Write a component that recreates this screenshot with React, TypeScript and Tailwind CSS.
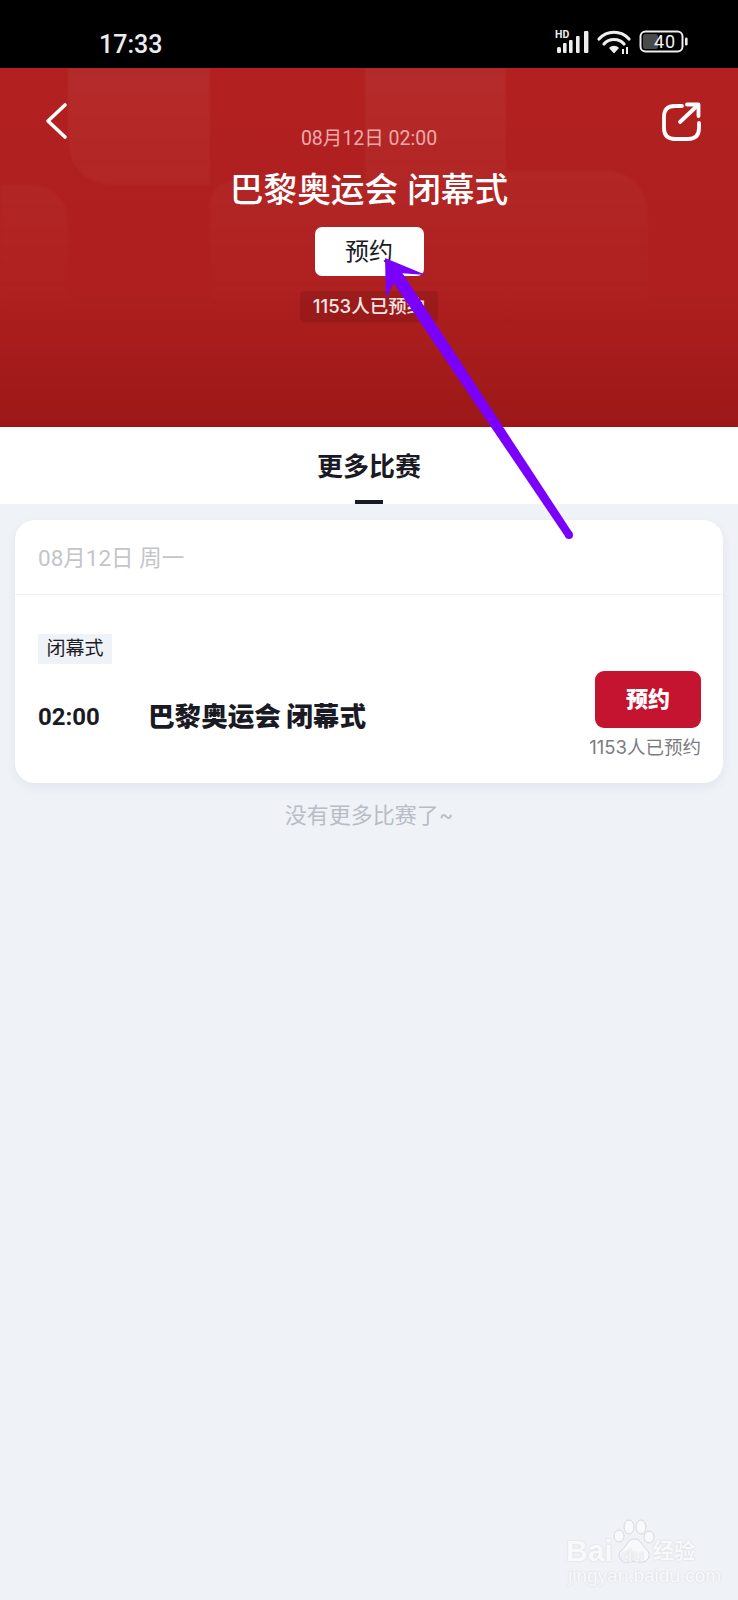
import React from 'react';

const FONT = "font-['Inter','Noto_Sans_CJK_SC',sans-serif]";
const NUM_FONT = "font-['Roboto','Noto_Sans_CJK_SC',sans-serif]";

const StatusBar: React.FC = () => (
  <div className="h-[68px] bg-black flex items-center justify-between pl-[99px] pr-[47px] shrink-0">
    <span className="text-[25px] leading-none font-medium text-[#ececec] font-['Roboto',sans-serif] mt-[20px]">17:33</span>
    <svg width="136" height="30" viewBox="0 0 136 30" className="mt-[20px]" fill="#eeeeee">
      <text x="0" y="9" fontSize="10.5" fontWeight="700" fontFamily="Roboto, sans-serif">HD</text>
      <rect x="2" y="18" width="4" height="6" rx="1.5" />
      <rect x="8" y="14" width="3.6" height="10" rx="1" />
      <rect x="14" y="11" width="3.6" height="13" rx="1" />
      <rect x="21" y="7" width="3.6" height="17" rx="1" />
      <rect x="29" y="2" width="4.4" height="22" rx="1" />
      <g fill="none" stroke="#eeeeee" strokeWidth="3.2" strokeLinecap="round">
        <path d="M44 10 C52 1 66 1 74 10" />
        <path d="M49 15 C54 9 64 9 69 15" />
      </g>
      <path d="M54 19 C57 16 61 16 64 19 L59 24.5 Z" />
      <rect x="67" y="20" width="2" height="5" />
      <rect x="71" y="18" width="2" height="7" />
      <rect x="85.5" y="2.5" width="42" height="20" rx="5" fill="none" stroke="#eeeeee" strokeWidth="2" />
      <rect x="88" y="5" width="15" height="15" rx="2.5" fill="#4a4a4a" />
      <text x="99" y="19" fontSize="18" fontWeight="400" fontFamily="Roboto, sans-serif" fill="#f2f2f2" textLength="21">40</text>
      <rect x="130" y="8.5" width="2.6" height="8" rx="1.2" />
    </svg>
  </div>
);

const HeroArt: React.FC = () => (
  <svg className="absolute inset-0 blur-[1px]" width="738" height="359" viewBox="0 0 738 359">
    <defs>
      <linearGradient id="fade" gradientUnits="userSpaceOnUse" x1="0" y1="0" x2="0" y2="265">
        <stop offset="0" stopColor="#ffffff" stopOpacity="0.05" />
        <stop offset="0.55" stopColor="#ffffff" stopOpacity="0.025" />
        <stop offset="1" stopColor="#ffffff" stopOpacity="0" />
      </linearGradient>
    </defs>
    <path fill="url(#fade)" d="M68 0 H210 V117 H118 Q68 117 68 67 Z" />
    <path fill="url(#fade)" d="M365 0 H506 V265 H210 V140 Q210 112 240 112 H365 Z" />
    <path fill="url(#fade)" d="M506 102 H598 Q648 102 648 152 V265 H506 Z" />
    <path fill="url(#fade)" d="M0 117 H28 Q68 117 68 157 V265 H0 Z" />
  </svg>
);

const ScheduleCard: React.FC = () => (
  <div className="mx-[15px] mt-[16px] h-[263px] rounded-[20px] bg-white shadow-[0_4px_12px_rgba(30,40,70,0.06)] flex flex-col">
    <div className="h-[75px] shrink-0 border-b border-[#f0f1f4] pl-[23px] pt-[3px] flex items-center">
      <span className={`text-[22.5px] text-[#c4c5c9] ${NUM_FONT}`}>08月12日 周一</span>
    </div>
    <div className="flex justify-between pl-[23px] pr-[22px]">
      <div className="pt-[39px]">
        <span className="inline-flex h-[30px] w-[74px] items-center justify-center bg-[#eff2f7] text-[19px] text-[#1c1c26]">闭幕式</span>
        <div className="mt-[33px] flex items-center h-[40px]">
          <span className={`w-[110px] text-[24px] font-bold text-[#1a1a24] ${NUM_FONT}`}>02:00</span>
          <span className="text-[26.6px] font-black text-[#1a1a24]">巴黎奥运会 闭幕式</span>
        </div>
      </div>
      <div className="pt-[76px] flex flex-col items-end">
        <button className="w-[106px] h-[57px] rounded-[9px] bg-[#c5142f] text-[22px] font-black text-white">预约</button>
        <span className="mt-[6px] text-[18.5px] leading-[26px] text-[#7a7c83]">1153人已预约</span>
      </div>
    </div>
  </div>
);

const Watermark: React.FC = () => (
  <div className="absolute left-[566px] top-[1518px] w-[140px] h-[70px] text-[#f8f9fb] [text-shadow:0_0_2px_#cfd3da]">
    <svg className="absolute left-[44px] top-0" width="50" height="50" viewBox="0 0 50 50" fill="#f8f9fb" stroke="#d5d9e0" strokeWidth="1">
      <ellipse cx="9" cy="18" rx="5" ry="6" />
      <ellipse cx="19" cy="9" rx="5" ry="7" />
      <ellipse cx="31" cy="9" rx="5" ry="7" />
      <ellipse cx="39" cy="19" rx="5" ry="6" />
      <path d="M24 21 C31 21 32 28 37 32 C42 37 38 45 30 44 C26 43 22 43 18 44 C10 45 6 37 12 32 C17 28 18 21 24 21 Z" />
    </svg>
    <span className="absolute left-0 top-[15px] text-[30px] leading-[36px] font-bold font-['Liberation_Sans',sans-serif]">Bai</span>
    <span className="absolute left-[55px] top-[27px] text-[19px] leading-[22px] font-bold text-[#f0f2f6] font-['Liberation_Sans',sans-serif]">du</span>
    <span className="absolute left-[87px] top-[19px] text-[21px] leading-[28px] font-bold whitespace-nowrap">经验</span>
    <span className="absolute left-[2px] top-[47px] text-[19px] leading-[22px] whitespace-nowrap font-['Liberation_Sans',sans-serif]">jingyan.baidu.com</span>
  </div>
);

const App: React.FC = () => (
  <div className={`relative w-[738px] h-[1600px] overflow-hidden bg-[#eff2f7] flex flex-col ${FONT}`}>
    <StatusBar />

    <div className="relative h-[359px] shrink-0 overflow-hidden bg-[linear-gradient(180deg,#b22020_0%,#af1f1f_62%,#9c1818_100%)]">
      <HeroArt />
      <div className="relative grid grid-cols-[100px_1fr_100px] pt-[34px]">
        <div className="pl-[44px]">
          <svg width="26" height="38" viewBox="0 0 26 38" fill="none" stroke="#ffffff" strokeWidth="3.6" strokeLinecap="round" strokeLinejoin="round">
            <path d="M21 3 L4 19 L21 35" />
          </svg>
        </div>
        <div className="flex flex-col items-center pt-[24px]">
          <span className={`text-[19.5px] leading-[26px] text-[#eeaaaa] ${NUM_FONT}`}>08月12日 02:00</span>
          <h1 className="mt-[16px] text-[33.7px] leading-[44px] font-medium text-white whitespace-nowrap">巴黎奥运会 闭幕式</h1>
          <button className="mt-[15px] w-[109px] h-[49px] rounded-[7px] bg-white text-[24px] text-[#1a1a24]">预约</button>
          <span className="mt-[15px] w-[138px] h-[31px] rounded-[4px] bg-black/10 text-[18.5px] font-medium text-[#f6e6e6] flex items-center justify-center whitespace-nowrap">1153人已预约</span>
        </div>
        <div className="flex justify-end pr-[35px]">
          <svg width="42" height="40" viewBox="0 0 42 40" fill="none" stroke="#ffffff" strokeWidth="3.8" strokeLinecap="round" strokeLinejoin="round">
            <path d="M21 4 H14 Q3 4 3 15 V26 Q3 37 14 37 H27 Q38 37 38 26 V21" />
            <path d="M19 20 L37 3" />
            <path d="M26 2.5 H37.5 V14" />
          </svg>
        </div>
      </div>
    </div>

    <div className="relative h-[77px] shrink-0 bg-white flex justify-center pt-[20px]">
      <span className="text-[26px] leading-[40px] font-bold text-[#1a1a24]">更多比赛</span>
      <span className="absolute left-[355px] bottom-0 w-[28px] h-[4px] bg-[#1a1a24]" />
    </div>

    <ScheduleCard />

    <p className="mt-[18px] text-center text-[22px] leading-[28px] text-[#b9bdc5]">没有更多比赛了~</p>

    <Watermark />

    <svg className="absolute inset-0 pointer-events-none" width="738" height="600" viewBox="0 0 738 600">
      <path d="M572.3 532.8 L399.4 268.4 L388.6 275.6 L565.7 537.2 Z" fill="#7a00fb" />
      <circle cx="569" cy="535" r="4" fill="#7a00fb" />
      <path d="M385 258 L426 275 L399 273 L386 298 Z" fill="#7a00fb" />
    </svg>
  </div>
);

export default App;
